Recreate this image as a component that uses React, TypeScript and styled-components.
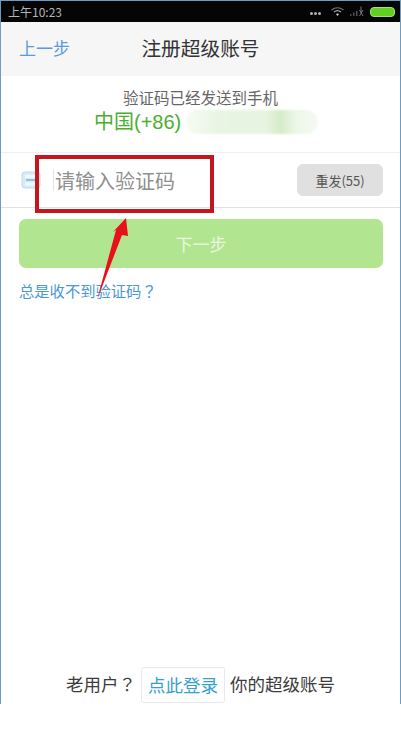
import React from "react";
import styled, { createGlobalStyle } from "styled-components";

const GlobalStyle = createGlobalStyle`
  html, body {
    margin: 0;
    padding: 0;
    background: #ffffff;
    font-family: "Noto Sans CJK SC", "Liberation Sans", sans-serif;
    text-spacing-trim: space-all;
  }
`;

const App: React.FC = () => {
  return (
    <>
      <GlobalStyle />
      <Page>
        <Phone>
          <StatusBar>
            <StatusTime>上午10:23</StatusTime>
            <StatusIcons>
              <Dots>
                <i />
                <i />
                <i />
              </Dots>
              <svg width="13" height="10" viewBox="0 0 13 10">
                <path d="M0.5 3 Q6.5 -1.5 12.5 3" fill="none" stroke="#777" strokeWidth="1.1" />
                <path d="M3 5 Q6.5 2.2 10 5" fill="none" stroke="#aaa" strokeWidth="1.1" />
                <path d="M5 7 Q6.5 6 8 7 L6.5 9 Z" fill="#d8d8d8" />
              </svg>
              <svg width="14" height="11" viewBox="0 0 14 11">
                <rect x="0" y="8" width="1.5" height="2" fill="#444" />
                <rect x="3" y="6.5" width="1.5" height="3.5" fill="#4c4c4c" />
                <rect x="6" y="5" width="1.5" height="5" fill="#555" />
                <path d="M11 0.5 V7 M9.5 4 L13 10 M13 4 L9.5 10" stroke="#777" strokeWidth="1" />
              </svg>
              <Battery />
            </StatusIcons>
          </StatusBar>
          <Header>
            <BackLink>上一步</BackLink>
            <Title>注册超级账号</Title>
          </Header>
          <Notice>
            <NoticeText>验证码已经发送到手机</NoticeText>
            <PhoneLine>
              中国(+86)
              <BlurredNumber />
            </PhoneLine>
          </Notice>
          <InputRow>
            <InputGroup>
              <svg width="20" height="18" viewBox="0 0 20 18">
                <rect x="1" y="1" width="18" height="16" rx="3" fill="#d6eaf8" stroke="#bcdcf2" />
                <rect x="4" y="4" width="12" height="3" fill="#f2f9fd" />
                <rect x="5" y="8" width="10" height="2" fill="#8cc2e8" />
                <rect x="4" y="11.5" width="12" height="3" fill="#f2f9fd" />
              </svg>
              <Divider />
              <Placeholder>请输入验证码</Placeholder>
            </InputGroup>
            <ResendButton>重发(55)</ResendButton>
          </InputRow>
          <Body>
            <NextButton>下一步</NextButton>
            <HelpLink>
              总是收不到验证码<FullQuestion>？</FullQuestion>
            </HelpLink>
          </Body>
          <Footer>
            <span>
              老用户<FullQuestion>？</FullQuestion>
            </span>
            <LoginLink>点此登录</LoginLink>
            <span>你的超级账号</span>
          </Footer>
          <RedBox />
          <Arrow width="40" height="84" viewBox="0 0 40 84">
            <path d="M32 0 L34 18 L28 17 L3 82 L22 12 L19 14 Z" fill="#e8101a" />
          </Arrow>
        </Phone>
      </Page>
    </>
  );
};

const Page = styled.div`
  width: 401px;
  height: 734px;
  overflow: hidden;
  background: #ffffff;
`;

const Phone = styled.div`
  position: relative;
  box-sizing: border-box;
  width: 401px;
  height: 704px;
  display: flex;
  flex-direction: column;
  background: #ffffff;
  border-left: 1px solid #6d9cc4;
  border-right: 1px solid #6d9cc4;
  border-top: 1px solid #6d9cc4;
`;

const StatusBar = styled.div`
  height: 21px;
  flex: none;
  display: flex;
  align-items: center;
  justify-content: space-between;
  padding: 0 5px 0 7px;
  background: #050505;
`;

const StatusTime = styled.span`
  font-size: 12px;
  color: #b4b4b4;
`;

const StatusIcons = styled.div`
  display: flex;
  align-items: center;
  gap: 6px;
`;

const Dots = styled.span`
  display: flex;
  gap: 1px;
  margin-top: 4px;
  margin-right: 4px;

  i {
    width: 3px;
    height: 3px;
    background: #b0b0b0;
    border-radius: 50%;
  }
`;

const Battery = styled.span`
  box-sizing: border-box;
  width: 25px;
  height: 10px;
  border-radius: 4px;
  background: #62d021;
  border: 1px solid #a4e27c;
`;

const Header = styled.div`
  position: relative;
  height: 54px;
  flex: none;
  display: flex;
  align-items: center;
  justify-content: center;
  padding-bottom: 3px;
  box-sizing: border-box;
  background: #f6f6f6;
`;

const BackLink = styled.span`
  position: absolute;
  left: 18px;
  top: 14px;
  font-size: 17px;
  line-height: 24px;
  color: #5c9bd9;
`;

const Title = styled.h1`
  margin: 0;
  font-size: 19.7px;
  font-weight: 400;
  color: #333333;
`;

const Notice = styled.div`
  height: 77px;
  flex: none;
  box-sizing: border-box;
  padding-top: 10px;
  border-bottom: 1px solid #f0f0f0;
  display: flex;
  flex-direction: column;
  align-items: center;
`;

const NoticeText = styled.div`
  font-size: 15.5px;
  line-height: 22px;
  color: #666666;
`;

const PhoneLine = styled.div`
  align-self: flex-start;
  display: flex;
  align-items: center;
  margin-left: 93px;
  margin-top: 1px;
  font-family: "Liberation Sans", "Noto Sans CJK SC", sans-serif;
  font-size: 20px;
  line-height: 26px;
  color: #4cae2e;
`;

const BlurredNumber = styled.span`
  width: 132px;
  height: 24px;
  margin-left: 5px;
  border-radius: 12px;
  background: linear-gradient(90deg, #f6fbf3 0%, #e8f5e3 25%, #e8f4e2 60%, #d5ebca 72%, #eef7ea 84%, #f4faf1 100%);
  filter: blur(1px);
`;

const InputRow = styled.div`
  height: 55px;
  flex: none;
  box-sizing: border-box;
  display: flex;
  align-items: center;
  justify-content: space-between;
  padding: 0 17px 0 20px;
  border-bottom: 1px solid #e0e0e6;
`;

const InputGroup = styled.div`
  display: flex;
  align-items: center;
`;

const Divider = styled.span`
  width: 1px;
  height: 22px;
  margin: 0 1px 0 12px;
  background: #e4e4e4;
`;

const Placeholder = styled.span`
  font-size: 20px;
  color: #8f8f8f;
`;

const ResendButton = styled.button`
  width: 86px;
  height: 32px;
  padding: 0;
  border: 1px solid #e0e0e0;
  border-radius: 6px;
  background: #e0e0e0;
  font-family: "Noto Sans CJK SC", "Liberation Sans", sans-serif;
  font-size: 13px;
  color: #555555;
`;

const Body = styled.div`
  flex: 1;
  display: flex;
  flex-direction: column;
  padding: 11px 17px 0 18px;
`;

const NextButton = styled.button`
  height: 49px;
  padding: 0;
  border: none;
  border-radius: 7px;
  background: #b2e58f;
  font-family: "Noto Sans CJK SC", "Liberation Sans", sans-serif;
  font-size: 17px;
  color: #eaf8df;
`;

const HelpLink = styled.span`
  margin-top: 11px;
  font-size: 15.3px;
  line-height: 22px;
  color: #4a98d6;
`;

const FullQuestion = styled.span`
  font-family: "Noto Sans CJK TC", sans-serif;
`;

const Footer = styled.div`
  height: 37px;
  flex: none;
  display: flex;
  align-items: flex-start;
  justify-content: center;
  gap: 5px;
  font-size: 17.5px;
  line-height: 34px;
  color: #3c3c3c;
`;

const LoginLink = styled.span`
  box-sizing: border-box;
  height: 36px;
  padding: 0 6px;
  border: 1px solid #e8e8ee;
  border-radius: 3px;
  color: #35a0cc;
`;

const RedBox = styled.div`
  position: absolute;
  left: 34px;
  top: 154px;
  box-sizing: border-box;
  width: 179px;
  height: 58px;
  border: 4px solid #c4161c;
`;

const Arrow = styled.svg`
  position: absolute;
  left: 93px;
  top: 217px;
`;

export default App;
